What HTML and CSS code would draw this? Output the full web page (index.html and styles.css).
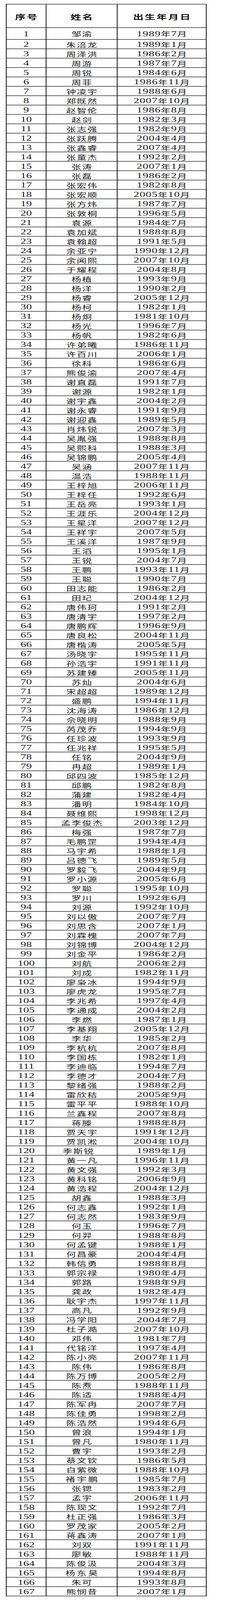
FILE: index.html
```html
<!DOCTYPE html>
<html lang="zh-CN">
<head>
<meta charset="utf-8">
<title>名单</title>
<link rel="stylesheet" href="styles.css">
</head>
<body>
<div class="frame">
<div class="sheet">
<div class="row head"><div class="cell">序号</div><div class="cell">姓名</div><div class="cell">出生年月日</div></div>
<div class="row first"><div class="cell">1</div><div class="cell name">邹渝</div><div class="cell date">1989<span class="u">年</span>7<span class="u">月</span></div></div>
<div class="row"><div class="cell">2</div><div class="cell name">朱涪龙</div><div class="cell date">1989<span class="u">年</span>1<span class="u">月</span></div></div>
<div class="row"><div class="cell">3</div><div class="cell name">周泽洪</div><div class="cell date">1986<span class="u">年</span>2<span class="u">月</span></div></div>
<div class="row"><div class="cell">4</div><div class="cell name">周游</div><div class="cell date">1987<span class="u">年</span>7<span class="u">月</span></div></div>
<div class="row"><div class="cell">5</div><div class="cell name">周锐</div><div class="cell date">1984<span class="u">年</span>6<span class="u">月</span></div></div>
<div class="row"><div class="cell">6</div><div class="cell name">周菲</div><div class="cell date">1986<span class="u">年</span>11<span class="u">月</span></div></div>
<div class="row"><div class="cell">7</div><div class="cell name">钟凌宇</div><div class="cell date">1988<span class="u">年</span>6<span class="u">月</span></div></div>
<div class="row"><div class="cell">8</div><div class="cell name">郑既然</div><div class="cell date">2007<span class="u">年</span>10<span class="u">月</span></div></div>
<div class="row"><div class="cell">9</div><div class="cell name">赵智伦</div><div class="cell date">1986<span class="u">年</span>8<span class="u">月</span></div></div>
<div class="row"><div class="cell">10</div><div class="cell name">赵剑</div><div class="cell date">1982<span class="u">年</span>3<span class="u">月</span></div></div>
<div class="row"><div class="cell">11</div><div class="cell name">张志强</div><div class="cell date">1982<span class="u">年</span>9<span class="u">月</span></div></div>
<div class="row"><div class="cell">12</div><div class="cell name">张跃腾</div><div class="cell date">2004<span class="u">年</span>4<span class="u">月</span></div></div>
<div class="row"><div class="cell">13</div><div class="cell name">张鑫睿</div><div class="cell date">2007<span class="u">年</span>4<span class="u">月</span></div></div>
<div class="row"><div class="cell">14</div><div class="cell name">张童杰</div><div class="cell date">1992<span class="u">年</span>2<span class="u">月</span></div></div>
<div class="row"><div class="cell">15</div><div class="cell name">张涛</div><div class="cell date">2007<span class="u">年</span>1<span class="u">月</span></div></div>
<div class="row"><div class="cell">16</div><div class="cell name">张磊</div><div class="cell date">1986<span class="u">年</span>2<span class="u">月</span></div></div>
<div class="row"><div class="cell">17</div><div class="cell name">张宏伟</div><div class="cell date">1982<span class="u">年</span>8<span class="u">月</span></div></div>
<div class="row"><div class="cell">18</div><div class="cell name">张宏顺</div><div class="cell date">2005<span class="u">年</span>10<span class="u">月</span></div></div>
<div class="row"><div class="cell">19</div><div class="cell name">张方炜</div><div class="cell date">1987<span class="u">年</span>7<span class="u">月</span></div></div>
<div class="row"><div class="cell">20</div><div class="cell name">张敦桐</div><div class="cell date">1996<span class="u">年</span>5<span class="u">月</span></div></div>
<div class="row"><div class="cell">21</div><div class="cell name">袁源</div><div class="cell date">1984<span class="u">年</span>7<span class="u">月</span></div></div>
<div class="row"><div class="cell">22</div><div class="cell name">袁加斌</div><div class="cell date">1988<span class="u">年</span>8<span class="u">月</span></div></div>
<div class="row"><div class="cell">23</div><div class="cell name">袁翰超</div><div class="cell date">1991<span class="u">年</span>5<span class="u">月</span></div></div>
<div class="row"><div class="cell">24</div><div class="cell name">余亚宁</div><div class="cell date">1990<span class="u">年</span>12<span class="u">月</span></div></div>
<div class="row"><div class="cell">25</div><div class="cell name">余闻熙</div><div class="cell date">2007<span class="u">年</span>10<span class="u">月</span></div></div>
<div class="row"><div class="cell">26</div><div class="cell name">于耀程</div><div class="cell date">2004<span class="u">年</span>8<span class="u">月</span></div></div>
<div class="row"><div class="cell">27</div><div class="cell name">杨植</div><div class="cell date">1993<span class="u">年</span>9<span class="u">月</span></div></div>
<div class="row"><div class="cell">28</div><div class="cell name">杨洋</div><div class="cell date">1990<span class="u">年</span>2<span class="u">月</span></div></div>
<div class="row"><div class="cell">29</div><div class="cell name">杨睿</div><div class="cell date">2005<span class="u">年</span>12<span class="u">月</span></div></div>
<div class="row"><div class="cell">30</div><div class="cell name">杨柯</div><div class="cell date">1982<span class="u">年</span>1<span class="u">月</span></div></div>
<div class="row"><div class="cell">31</div><div class="cell name">杨炯</div><div class="cell date">1981<span class="u">年</span>10<span class="u">月</span></div></div>
<div class="row"><div class="cell">32</div><div class="cell name">杨光</div><div class="cell date">1996<span class="u">年</span>7<span class="u">月</span></div></div>
<div class="row"><div class="cell">33</div><div class="cell name">杨帆</div><div class="cell date">1982<span class="u">年</span>6<span class="u">月</span></div></div>
<div class="row"><div class="cell">34</div><div class="cell name">许弟曦</div><div class="cell date">1986<span class="u">年</span>11<span class="u">月</span></div></div>
<div class="row"><div class="cell">35</div><div class="cell name">许百川</div><div class="cell date">2006<span class="u">年</span>1<span class="u">月</span></div></div>
<div class="row"><div class="cell">36</div><div class="cell name">徐科</div><div class="cell date">1986<span class="u">年</span>6<span class="u">月</span></div></div>
<div class="row"><div class="cell">37</div><div class="cell name">熊俊渝</div><div class="cell date">2007<span class="u">年</span>4<span class="u">月</span></div></div>
<div class="row"><div class="cell">38</div><div class="cell name">谢直磊</div><div class="cell date">1991<span class="u">年</span>7<span class="u">月</span></div></div>
<div class="row"><div class="cell">39</div><div class="cell name">谢源</div><div class="cell date">1982<span class="u">年</span>1<span class="u">月</span></div></div>
<div class="row"><div class="cell">40</div><div class="cell name">谢宇鑫</div><div class="cell date">2004<span class="u">年</span>2<span class="u">月</span></div></div>
<div class="row"><div class="cell">41</div><div class="cell name">谢永睿</div><div class="cell date">1991<span class="u">年</span>9<span class="u">月</span></div></div>
<div class="row"><div class="cell">42</div><div class="cell name">谢迎鑫</div><div class="cell date">1989<span class="u">年</span>5<span class="u">月</span></div></div>
<div class="row"><div class="cell">43</div><div class="cell name">肖炜锐</div><div class="cell date">2007<span class="u">年</span>3<span class="u">月</span></div></div>
<div class="row"><div class="cell">44</div><div class="cell name">吴胤强</div><div class="cell date">1988<span class="u">年</span>8<span class="u">月</span></div></div>
<div class="row"><div class="cell">45</div><div class="cell name">吴熙科</div><div class="cell date">1988<span class="u">年</span>3<span class="u">月</span></div></div>
<div class="row"><div class="cell">46</div><div class="cell name">吴锦鹏</div><div class="cell date">2005<span class="u">年</span>4<span class="u">月</span></div></div>
<div class="row"><div class="cell">47</div><div class="cell name">吴涵</div><div class="cell date">2007<span class="u">年</span>11<span class="u">月</span></div></div>
<div class="row"><div class="cell">48</div><div class="cell name">温浩</div><div class="cell date">1988<span class="u">年</span>11<span class="u">月</span></div></div>
<div class="row"><div class="cell">49</div><div class="cell name">王梓旭</div><div class="cell date">2006<span class="u">年</span>11<span class="u">月</span></div></div>
<div class="row"><div class="cell">50</div><div class="cell name">王梓任</div><div class="cell date">1992<span class="u">年</span>6<span class="u">月</span></div></div>
<div class="row"><div class="cell">51</div><div class="cell name">王岳亮</div><div class="cell date">1993<span class="u">年</span>1<span class="u">月</span></div></div>
<div class="row"><div class="cell">52</div><div class="cell name">王涯乐</div><div class="cell date">2004<span class="u">年</span>12<span class="u">月</span></div></div>
<div class="row"><div class="cell">53</div><div class="cell name">王星洋</div><div class="cell date">2007<span class="u">年</span>12<span class="u">月</span></div></div>
<div class="row"><div class="cell">54</div><div class="cell name">王祥宇</div><div class="cell date">2007<span class="u">年</span>5<span class="u">月</span></div></div>
<div class="row"><div class="cell">55</div><div class="cell name">王溪洋</div><div class="cell date">1987<span class="u">年</span>9<span class="u">月</span></div></div>
<div class="row"><div class="cell">56</div><div class="cell name">王滔</div><div class="cell date">1995<span class="u">年</span>1<span class="u">月</span></div></div>
<div class="row"><div class="cell">57</div><div class="cell name">王锐</div><div class="cell date">2004<span class="u">年</span>7<span class="u">月</span></div></div>
<div class="row"><div class="cell">58</div><div class="cell name">王鹏</div><div class="cell date">1993<span class="u">年</span>11<span class="u">月</span></div></div>
<div class="row"><div class="cell">59</div><div class="cell name">王聪</div><div class="cell date">1990<span class="u">年</span>7<span class="u">月</span></div></div>
<div class="row"><div class="cell">60</div><div class="cell name">田志能</div><div class="cell date">1986<span class="u">年</span>2<span class="u">月</span></div></div>
<div class="row"><div class="cell">61</div><div class="cell name">田玘</div><div class="cell date">2004<span class="u">年</span>12<span class="u">月</span></div></div>
<div class="row"><div class="cell">62</div><div class="cell name">唐伟珂</div><div class="cell date">1991<span class="u">年</span>2<span class="u">月</span></div></div>
<div class="row"><div class="cell">63</div><div class="cell name">唐清宇</div><div class="cell date">1997<span class="u">年</span>2<span class="u">月</span></div></div>
<div class="row"><div class="cell">64</div><div class="cell name">唐鹏辉</div><div class="cell date">1996<span class="u">年</span>9<span class="u">月</span></div></div>
<div class="row"><div class="cell">65</div><div class="cell name">唐良松</div><div class="cell date">2004<span class="u">年</span>11<span class="u">月</span></div></div>
<div class="row"><div class="cell">66</div><div class="cell name">唐楷涛</div><div class="cell date">2005<span class="u">年</span>5<span class="u">月</span></div></div>
<div class="row"><div class="cell">67</div><div class="cell name">汤晓宇</div><div class="cell date">1995<span class="u">年</span>11<span class="u">月</span></div></div>
<div class="row"><div class="cell">68</div><div class="cell name">孙浩宇</div><div class="cell date">1991<span class="u">年</span>11<span class="u">月</span></div></div>
<div class="row"><div class="cell">69</div><div class="cell name">苏建臻</div><div class="cell date">2005<span class="u">年</span>11<span class="u">月</span></div></div>
<div class="row"><div class="cell">70</div><div class="cell name">苏灿</div><div class="cell date">2004<span class="u">年</span>6<span class="u">月</span></div></div>
<div class="row"><div class="cell">71</div><div class="cell name">宋超超</div><div class="cell date">1989<span class="u">年</span>12<span class="u">月</span></div></div>
<div class="row"><div class="cell">72</div><div class="cell name">盛鹏</div><div class="cell date">1994<span class="u">年</span>11<span class="u">月</span></div></div>
<div class="row"><div class="cell">73</div><div class="cell name">沈海涛</div><div class="cell date">1986<span class="u">年</span>12<span class="u">月</span></div></div>
<div class="row"><div class="cell">74</div><div class="cell name">佘晓明</div><div class="cell date">1988<span class="u">年</span>9<span class="u">月</span></div></div>
<div class="row"><div class="cell">75</div><div class="cell name">芮茂乔</div><div class="cell date">1994<span class="u">年</span>9<span class="u">月</span></div></div>
<div class="row"><div class="cell">76</div><div class="cell name">任珍波</div><div class="cell date">1993<span class="u">年</span>9<span class="u">月</span></div></div>
<div class="row"><div class="cell">77</div><div class="cell name">任兆祥</div><div class="cell date">1995<span class="u">年</span>5<span class="u">月</span></div></div>
<div class="row"><div class="cell">78</div><div class="cell name">任铭</div><div class="cell date">2004<span class="u">年</span>9<span class="u">月</span></div></div>
<div class="row"><div class="cell">79</div><div class="cell name">冉超</div><div class="cell date">1989<span class="u">年</span>1<span class="u">月</span></div></div>
<div class="row"><div class="cell">80</div><div class="cell name">邱四波</div><div class="cell date">1985<span class="u">年</span>12<span class="u">月</span></div></div>
<div class="row"><div class="cell">81</div><div class="cell name">邱鹏</div><div class="cell date">1982<span class="u">年</span>8<span class="u">月</span></div></div>
<div class="row"><div class="cell">82</div><div class="cell name">蒲建</div><div class="cell date">1982<span class="u">年</span>4<span class="u">月</span></div></div>
<div class="row"><div class="cell">83</div><div class="cell name">潘明</div><div class="cell date">1984<span class="u">年</span>10<span class="u">月</span></div></div>
<div class="row"><div class="cell">84</div><div class="cell name">聂维熙</div><div class="cell date">1998<span class="u">年</span>12<span class="u">月</span></div></div>
<div class="row"><div class="cell">85</div><div class="cell name">孟李俊杰</div><div class="cell date">2003<span class="u">年</span>12<span class="u">月</span></div></div>
<div class="row"><div class="cell">86</div><div class="cell name">梅强</div><div class="cell date">1987<span class="u">年</span>7<span class="u">月</span></div></div>
<div class="row"><div class="cell">87</div><div class="cell name">毛鹏罡</div><div class="cell date">1994<span class="u">年</span>4<span class="u">月</span></div></div>
<div class="row"><div class="cell">88</div><div class="cell name">马宇希</div><div class="cell date">1988<span class="u">年</span>1<span class="u">月</span></div></div>
<div class="row"><div class="cell">89</div><div class="cell name">吕德飞</div><div class="cell date">1989<span class="u">年</span>5<span class="u">月</span></div></div>
<div class="row"><div class="cell">90</div><div class="cell name">罗毅飞</div><div class="cell date">2004<span class="u">年</span>9<span class="u">月</span></div></div>
<div class="row"><div class="cell">91</div><div class="cell name">罗小源</div><div class="cell date">2005<span class="u">年</span>6<span class="u">月</span></div></div>
<div class="row"><div class="cell">92</div><div class="cell name">罗聪</div><div class="cell date">1995<span class="u">年</span>10<span class="u">月</span></div></div>
<div class="row"><div class="cell">93</div><div class="cell name">罗川</div><div class="cell date">1992<span class="u">年</span>6<span class="u">月</span></div></div>
<div class="row"><div class="cell">94</div><div class="cell name">刘源</div><div class="cell date">1992<span class="u">年</span>10<span class="u">月</span></div></div>
<div class="row"><div class="cell">95</div><div class="cell name">刘以傲</div><div class="cell date">2007<span class="u">年</span>7<span class="u">月</span></div></div>
<div class="row"><div class="cell">96</div><div class="cell name">刘思含</div><div class="cell date">2007<span class="u">年</span>1<span class="u">月</span></div></div>
<div class="row"><div class="cell">97</div><div class="cell name">刘霖槐</div><div class="cell date">2007<span class="u">年</span>7<span class="u">月</span></div></div>
<div class="row"><div class="cell">98</div><div class="cell name">刘锦博</div><div class="cell date">2004<span class="u">年</span>12<span class="u">月</span></div></div>
<div class="row"><div class="cell">99</div><div class="cell name">刘金平</div><div class="cell date">1986<span class="u">年</span>2<span class="u">月</span></div></div>
<div class="row"><div class="cell">100</div><div class="cell name">刘航</div><div class="cell date">2006<span class="u">年</span>2<span class="u">月</span></div></div>
<div class="row"><div class="cell">101</div><div class="cell name">刘成</div><div class="cell date">1982<span class="u">年</span>11<span class="u">月</span></div></div>
<div class="row"><div class="cell">102</div><div class="cell name">廖枭冰</div><div class="cell date">1994<span class="u">年</span>9<span class="u">月</span></div></div>
<div class="row"><div class="cell">103</div><div class="cell name">廖虎龙</div><div class="cell date">1995<span class="u">年</span>7<span class="u">月</span></div></div>
<div class="row"><div class="cell">104</div><div class="cell name">李兆希</div><div class="cell date">1997<span class="u">年</span>4<span class="u">月</span></div></div>
<div class="row"><div class="cell">105</div><div class="cell name">李通成</div><div class="cell date">2004<span class="u">年</span>2<span class="u">月</span></div></div>
<div class="row"><div class="cell">106</div><div class="cell name">李燃</div><div class="cell date">1987<span class="u">年</span>1<span class="u">月</span></div></div>
<div class="row"><div class="cell">107</div><div class="cell name">李基翔</div><div class="cell date">2005<span class="u">年</span>12<span class="u">月</span></div></div>
<div class="row"><div class="cell">108</div><div class="cell name">李华</div><div class="cell date">1985<span class="u">年</span>2<span class="u">月</span></div></div>
<div class="row"><div class="cell">109</div><div class="cell name">李杭杭</div><div class="cell date">2007<span class="u">年</span>8<span class="u">月</span></div></div>
<div class="row"><div class="cell">110</div><div class="cell name">李国栋</div><div class="cell date">1982<span class="u">年</span>1<span class="u">月</span></div></div>
<div class="row"><div class="cell">111</div><div class="cell name">李迪临</div><div class="cell date">1994<span class="u">年</span>7<span class="u">月</span></div></div>
<div class="row"><div class="cell">112</div><div class="cell name">李德才</div><div class="cell date">2004<span class="u">年</span>7<span class="u">月</span></div></div>
<div class="row"><div class="cell">113</div><div class="cell name">黎绪强</div><div class="cell date">1988<span class="u">年</span>2<span class="u">月</span></div></div>
<div class="row"><div class="cell">114</div><div class="cell name">雷欣秸</div><div class="cell date">2005<span class="u">年</span>9<span class="u">月</span></div></div>
<div class="row"><div class="cell">115</div><div class="cell name">雷平平</div><div class="cell date">1988<span class="u">年</span>10<span class="u">月</span></div></div>
<div class="row"><div class="cell">116</div><div class="cell name">兰鑫程</div><div class="cell date">2007<span class="u">年</span>8<span class="u">月</span></div></div>
<div class="row"><div class="cell">117</div><div class="cell name">蒋滕</div><div class="cell date">1988<span class="u">年</span>8<span class="u">月</span></div></div>
<div class="row"><div class="cell">118</div><div class="cell name">贾天宇</div><div class="cell date">1991<span class="u">年</span>12<span class="u">月</span></div></div>
<div class="row"><div class="cell">119</div><div class="cell name">贾凯淞</div><div class="cell date">2004<span class="u">年</span>10<span class="u">月</span></div></div>
<div class="row"><div class="cell">120</div><div class="cell name shift">季斯锐</div><div class="cell date">1989<span class="u">年</span>1<span class="u">月</span></div></div>
<div class="row"><div class="cell">121</div><div class="cell name">黄一凡</div><div class="cell date">1996<span class="u">年</span>11<span class="u">月</span></div></div>
<div class="row"><div class="cell">122</div><div class="cell name">黄文强</div><div class="cell date">1992<span class="u">年</span>3<span class="u">月</span></div></div>
<div class="row"><div class="cell">123</div><div class="cell name">黄科铭</div><div class="cell date">2006<span class="u">年</span>9<span class="u">月</span></div></div>
<div class="row"><div class="cell">124</div><div class="cell name">黄浩程</div><div class="cell date">2004<span class="u">年</span>12<span class="u">月</span></div></div>
<div class="row"><div class="cell">125</div><div class="cell name">胡鑫</div><div class="cell date">1988<span class="u">年</span>3<span class="u">月</span></div></div>
<div class="row"><div class="cell">126</div><div class="cell name">何志鑫</div><div class="cell date">1992<span class="u">年</span>1<span class="u">月</span></div></div>
<div class="row"><div class="cell">127</div><div class="cell name">何志然</div><div class="cell date">1983<span class="u">年</span>9<span class="u">月</span></div></div>
<div class="row"><div class="cell">128</div><div class="cell name">何玉</div><div class="cell date">1996<span class="u">年</span>7<span class="u">月</span></div></div>
<div class="row"><div class="cell">129</div><div class="cell name">何羿</div><div class="cell date">1988<span class="u">年</span>8<span class="u">月</span></div></div>
<div class="row"><div class="cell">130</div><div class="cell name">何孟键</div><div class="cell date">1988<span class="u">年</span>1<span class="u">月</span></div></div>
<div class="row"><div class="cell">131</div><div class="cell name">何昌豪</div><div class="cell date">2004<span class="u">年</span>4<span class="u">月</span></div></div>
<div class="row"><div class="cell">132</div><div class="cell name">韩信勇</div><div class="cell date">1988<span class="u">年</span>8<span class="u">月</span></div></div>
<div class="row"><div class="cell">133</div><div class="cell name">郭宗禄</div><div class="cell date">1980<span class="u">年</span>4<span class="u">月</span></div></div>
<div class="row"><div class="cell">134</div><div class="cell name">郭路</div><div class="cell date">1988<span class="u">年</span>9<span class="u">月</span></div></div>
<div class="row"><div class="cell">135</div><div class="cell name">龚政</div><div class="cell date">1982<span class="u">年</span>4<span class="u">月</span></div></div>
<div class="row"><div class="cell">136</div><div class="cell name">耿宇杰</div><div class="cell date">1997<span class="u">年</span>11<span class="u">月</span></div></div>
<div class="row"><div class="cell">137</div><div class="cell name">高凡</div><div class="cell date">1992<span class="u">年</span>9<span class="u">月</span></div></div>
<div class="row"><div class="cell">138</div><div class="cell name">冯学阳</div><div class="cell date">2004<span class="u">年</span>7<span class="u">月</span></div></div>
<div class="row"><div class="cell">139</div><div class="cell name">杜子澔</div><div class="cell date">2007<span class="u">年</span>10<span class="u">月</span></div></div>
<div class="row"><div class="cell">140</div><div class="cell name">邓伟</div><div class="cell date">1981<span class="u">年</span>7<span class="u">月</span></div></div>
<div class="row"><div class="cell">141</div><div class="cell name">代铭洋</div><div class="cell date">1997<span class="u">年</span>4<span class="u">月</span></div></div>
<div class="row"><div class="cell">142</div><div class="cell name">陈小亮</div><div class="cell date">2007<span class="u">年</span>11<span class="u">月</span></div></div>
<div class="row"><div class="cell">143</div><div class="cell name">陈伟</div><div class="cell date">1986<span class="u">年</span>8<span class="u">月</span></div></div>
<div class="row"><div class="cell">144</div><div class="cell name">陈万博</div><div class="cell date">2005<span class="u">年</span>2<span class="u">月</span></div></div>
<div class="row"><div class="cell">145</div><div class="cell name">陈焘</div><div class="cell date">1988<span class="u">年</span>11<span class="u">月</span></div></div>
<div class="row"><div class="cell">146</div><div class="cell name">陈适</div><div class="cell date">1988<span class="u">年</span>4<span class="u">月</span></div></div>
<div class="row"><div class="cell">147</div><div class="cell name">陈军冉</div><div class="cell date">2007<span class="u">年</span>7<span class="u">月</span></div></div>
<div class="row"><div class="cell">148</div><div class="cell name">陈佳勇</div><div class="cell date">1998<span class="u">年</span>2<span class="u">月</span></div></div>
<div class="row"><div class="cell">149</div><div class="cell name">陈浩然</div><div class="cell date">1994<span class="u">年</span>6<span class="u">月</span></div></div>
<div class="row"><div class="cell">150</div><div class="cell name">曾浪</div><div class="cell date">1994<span class="u">年</span>1<span class="u">月</span></div></div>
<div class="row"><div class="cell">151</div><div class="cell name">曾凡</div><div class="cell date">1980<span class="u">年</span>11<span class="u">月</span></div></div>
<div class="row"><div class="cell">152</div><div class="cell name">曹宇</div><div class="cell date">1993<span class="u">年</span>2<span class="u">月</span></div></div>
<div class="row"><div class="cell">153</div><div class="cell name">蔡文钦</div><div class="cell date">1986<span class="u">年</span>5<span class="u">月</span></div></div>
<div class="row"><div class="cell">154</div><div class="cell name">白紫微</div><div class="cell date">1988<span class="u">年</span>10<span class="u">月</span></div></div>
<div class="row"><div class="cell">155</div><div class="cell name wide">褚宇鹏</div><div class="cell date">1985<span class="u">年</span>7<span class="u">月</span></div></div>
<div class="row"><div class="cell">156</div><div class="cell name">张锶</div><div class="cell date">1983<span class="u">年</span>2<span class="u">月</span></div></div>
<div class="row"><div class="cell">157</div><div class="cell name">孟宇</div><div class="cell date">2006<span class="u">年</span>11<span class="u">月</span></div></div>
<div class="row"><div class="cell">158</div><div class="cell name">陈现文</div><div class="cell date">1992<span class="u">年</span>7<span class="u">月</span></div></div>
<div class="row"><div class="cell">159</div><div class="cell name">杜正强</div><div class="cell date">1986<span class="u">年</span>3<span class="u">月</span></div></div>
<div class="row"><div class="cell">160</div><div class="cell name">罗茂家</div><div class="cell date">2005<span class="u">年</span>2<span class="u">月</span></div></div>
<div class="row"><div class="cell">161</div><div class="cell name">蒋鑫涛</div><div class="cell date">2007<span class="u">年</span>1<span class="u">月</span></div></div>
<div class="row"><div class="cell">162</div><div class="cell name">刘双</div><div class="cell date">1991<span class="u">年</span>11<span class="u">月</span></div></div>
<div class="row"><div class="cell">163</div><div class="cell name">廖敏</div><div class="cell date">1988<span class="u">年</span>11<span class="u">月</span></div></div>
<div class="row"><div class="cell">164</div><div class="cell name">陈俊汲</div><div class="cell date">2004<span class="u">年</span>3<span class="u">月</span></div></div>
<div class="row"><div class="cell">165</div><div class="cell name wide">杨东昊</div><div class="cell date">1994<span class="u">年</span>8<span class="u">月</span></div></div>
<div class="row"><div class="cell">166</div><div class="cell name">朱可</div><div class="cell date">1993<span class="u">年</span>8<span class="u">月</span></div></div>
<div class="row"><div class="cell">167</div><div class="cell name">熊悯昔</div><div class="cell date">2007<span class="u">年</span>1<span class="u">月</span></div></div>
</div>
</div>
</body>
</html>
```

FILE: styles.css
```css
html, body {
  margin: 0;
  padding: 0;
  background: #ffffff;
}

body {
  font-family: "Liberation Serif", "Noto Sans CJK SC", serif;
  color: #1a1a1a;
}

/* The capture window is 4096px tall; the 6484px-tall sheet is drawn
   squeezed vertically (4096 / 6484) so that the whole list stays visible. */
.frame {
  height: 4096px;
  overflow: hidden;
}

.sheet {
  width: 514px;
  margin: 9.5px 0 0 15px;
  box-sizing: border-box;
  border-top: 2px solid #111;
  border-left: 2px solid #111;
  transform: scale(1, 0.6317);
  transform-origin: 0 0;
}

.row {
  display: grid;
  grid-template-columns: 102px 182px 228px;
  height: 38px;
}

.row.head {
  height: 95px;
}

.row.first {
  height: 48px;
}

.cell {
  box-sizing: border-box;
  min-height: 0;
  overflow: hidden;
  border-right: 2px solid #111;
  border-bottom: 2px solid #111;
  display: flex;
  align-items: center;
  justify-content: center;
  padding-top: 3px;
  font-size: 29px;
  line-height: 1;
  white-space: nowrap;
}

.head .cell {
  font-family: "Noto Sans CJK SC", sans-serif;
  font-weight: 700;
  font-size: 27px;
  letter-spacing: 3px;
  padding-left: 3px;
  padding-top: 6px;
  color: #111;
}

.name {
  font-family: "Noto Sans CJK SC", sans-serif;
  font-size: 25px;
  letter-spacing: 2px;
  padding-left: 2px;
}

.name.shift {
  padding-right: 18px;
}

.name.wide {
  letter-spacing: 4px;
  padding-left: 4px;
}

.date {
  letter-spacing: 1px;
  padding-left: 1px;
}

.date .u {
  font-family: "Noto Sans CJK SC", sans-serif;
  font-size: 25px;
}
```
